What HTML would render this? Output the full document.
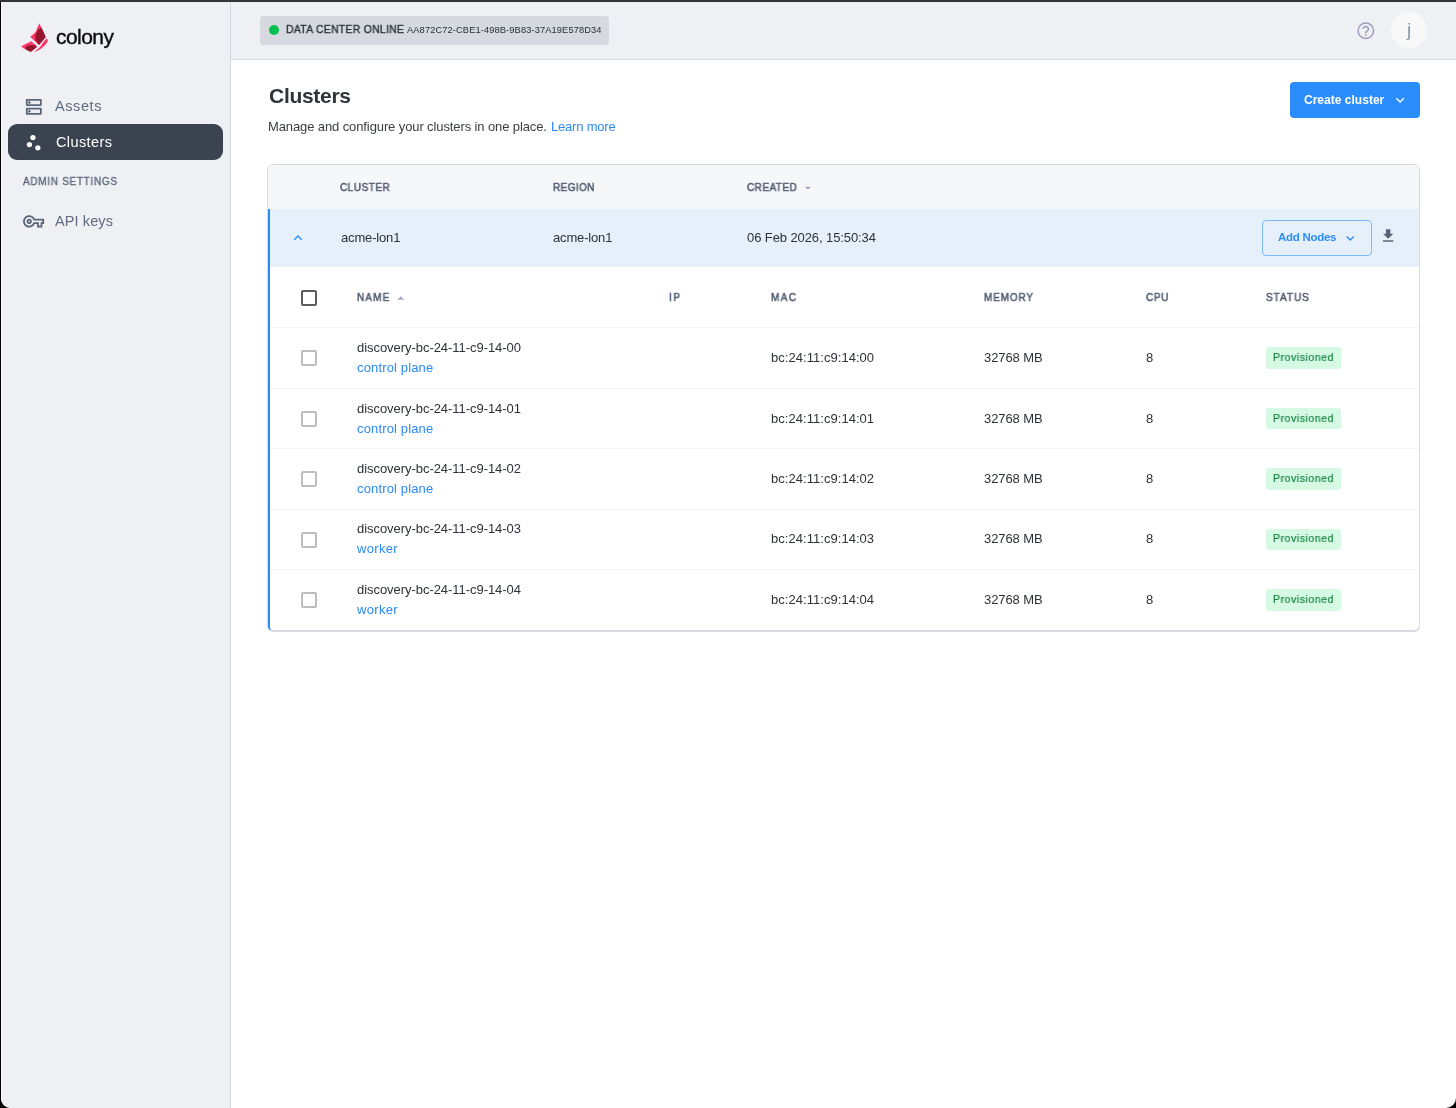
<!DOCTYPE html>
<html><head><meta charset="utf-8">
<style>
*{box-sizing:border-box;margin:0;padding:0}
html,body{width:1456px;height:1108px;overflow:hidden;background:#000;font-family:"Liberation Sans",sans-serif;position:relative}
.t{position:absolute;white-space:nowrap;line-height:normal;will-change:transform}
.b{position:absolute}
.cb{position:absolute;left:301px;width:16px;height:16px;border:2px solid #bdbdbd;border-radius:2px;background:#fff}
.rl{position:absolute;left:270px;width:1149px;height:1px;background:#f3f4f4}
.badge{position:absolute;left:1266px;width:75px;height:21.5px;background:#d5f9e3;border-radius:3px}

</style></head><body>
<div class="b" style="left:0;top:0;width:1456px;height:1px;background:#373737"></div><div class="b" style="left:0;top:1px;width:1456px;height:1px;background:#2f3130"></div>
<div class="b" style="left:0;top:2px;width:1456px;height:1106px;background:#fff;border-radius:0 0 10px 10px;border-left:1px solid #000"></div>
<div class="b" style="left:1px;top:2px;width:229px;height:1106px;background:#eff0f4;border-left:1px solid #fff;border-bottom-left-radius:10px"></div>
<div class="b" style="left:230px;top:2px;width:1px;height:1106px;background:#d6d9df"></div>
<div class="b" style="left:231px;top:2px;width:1225px;height:57px;background:#eff0f4"></div>
<div class="b" style="left:231px;top:59px;width:1225px;height:1px;background:#d6d9df"></div>

<!-- logo -->
<svg class="b" style="left:18px;top:20px" width="34" height="36" viewBox="18 20 34 36">
  <path d="M39.3 23.2 L45.7 36.9 L39 45.2 L30.2 36.7 L35.4 32.6 Z" fill="#ff3566"/>
  <path d="M41.4 27.4 L45.7 36.9 L39.1 44.8 C36.3 42 35 39.5 35.2 36.4 C35.4 33 37.5 29.6 41.4 27.4 Z" fill="#95152f"/>
  <path d="M21 46.3 L31.3 41.2 L37 46.4 L31 51.8 C27.5 50.5 24 48.6 21 46.3 Z" fill="#ff3566"/>
  <path d="M25 48.2 C26 46.3 27.5 45.3 30 45.2 L35.3 45.3 L37 46.9 L31 51.8 C28.6 51.2 26.6 49.9 25 48.2 Z" fill="#95152f"/>
  <path d="M46.6 38.4 L48 40.3 C46 45.5 41 50 33.6 52.3 C38.5 49 41.5 46 43 42.5 Z" fill="#ff3566"/>
</svg>
<!-- nav icons -->
<svg class="b" style="left:0;top:0" width="240" height="240" viewBox="0 0 240 240">
  <g transform="translate(23.25 96.3) scale(0.88)" fill="#5a6579">
    <path d="M19 15v4H5v-4h14m1-2H4c-.55 0-1 .45-1 1v6c0 .55.45 1 1 1h16c.55 0 1-.45 1-1v-6c0-.55-.45-1-1-1zM7 18.5c-.82 0-1.5-.67-1.5-1.5s.68-1.5 1.5-1.5 1.5.67 1.5 1.5-.67 1.5-1.5 1.5zM19 5v4H5V5h14m1-2H4c-.55 0-1 .45-1 1v6c0 .55.45 1 1 1h16c.55 0 1-.45 1-1V4c0-.55-.45-1-1-1zM7 8.5c-.82 0-1.5-.67-1.5-1.5S6.18 5.5 7 5.5s1.5.68 1.5 1.5S7.830 8.5 7 8.5z"/>
  </g>
</svg>
<div class="b" style="left:8px;top:124px;width:215px;height:36px;background:#3b4250;border-radius:9px"></div>
<svg class="b" style="left:0;top:0" width="240" height="240" viewBox="0 0 240 240">
  <g transform="translate(23.25 132.3) scale(0.88)" fill="#fff">
    <circle cx="7" cy="14" r="3"/><circle cx="11" cy="6" r="3"/><circle cx="16.6" cy="17.6" r="3"/>
  </g>
  <g transform="translate(23.1 210.9) scale(0.875)" fill="#5a6579">
    <path d="M22 19h-6v-4h-2.68c-1.14 2.42-3.6 4-6.32 4-3.86 0-7-3.14-7-7s3.14-7 7-7c2.72 0 5.17 1.58 6.32 4H24v6h-2v4zm-4-2h2v-4h2v-2H11.94l-.23-.67C11.01 8.340 9.11 7 7 7c-2.76 0-5 2.24-5 5s2.24 5 5 5c2.11 0 4.01-1.34 4.71-3.33l.23-.67H18v4zM7 15c-1.65 0-3-1.35-3-3s1.35-3 3-3 3 1.35 3 3-1.35 3-3 3zm0-4c-.55 0-1 .45-1 1s.45 1 1 1 1-.45 1-1-.45-1-1-1z"/>
  </g>
</svg>

<!-- header chip -->
<div class="b" style="left:260px;top:16px;width:349px;height:29px;background:#d6d9e0;border-radius:4px"></div>
<div class="b" style="left:269px;top:25px;width:10px;height:10px;border-radius:50%;background:#00c150"></div>
<svg class="b" style="left:1340px;top:0" width="60" height="60" viewBox="1340 0 60 60">
  <g transform="translate(1355.6 20.6) scale(0.85)" fill="#9c9cbb">
    <circle cx="12" cy="12" r="9.15" fill="none" stroke="#9c9cbb" stroke-width="1.7"/>
    <path d="M11.1 17.9h1.8v-1.8h-1.8v1.8zM12 6c-2.21 0-4 1.79-4 4h1.8c0-1.2.95-2.2 2.2-2.2s2.2 1 2.2 2.2c0 2-3.1 1.75-3.1 5h1.8c0-2.25 3.1-2.5 3.1-5 0-2.21-1.79-4-4-4z"/>
  </g>
</svg>
<div class="b" style="left:1391px;top:12px;width:36px;height:36px;border-radius:50%;background:#f8f8f9"></div>

<!-- title button -->
<div class="b" style="left:1290px;top:82px;width:130px;height:36px;background:#2b8cfb;border-radius:4px"></div>
<svg class="b" style="left:1380px;top:85px" width="30" height="30" viewBox="1380 85 30 30">
  <g transform="translate(1391.7 91.7) scale(0.7)" fill="#fff"><path d="M16.59 8.59L12 13.17 7.41 8.59 6 10l6 6 6-6z"/></g>
</svg>

<!-- card -->
<div class="b" style="left:267px;top:164px;width:1153px;height:467px;border:1px solid #d8d9e2;border-radius:6px;background:#fff;box-shadow:0 1px 0 #dadbe0"></div>
<div class="b" style="left:268px;top:165px;width:1151px;height:44px;background:#f6f7f9;border-radius:5px 5px 0 0"></div>
<div class="b" style="left:268px;top:209px;width:1151px;height:58px;background:#e6f0fa"></div>
<div class="b" style="left:268px;top:209px;width:4px;height:421px;border-left:2px solid #2b8cfb;border-bottom-left-radius:5px"></div>
<svg class="b" style="left:280px;top:220px" width="30" height="30" viewBox="280 220 30 30">
  <g transform="translate(289.6 229.4) scale(0.7)" fill="#2b8cfb"><path d="M12 8l-6 6 1.41 1.41L12 10.830l4.59 4.58L18 14z"/></g>
</svg>
<svg class="b" style="left:795px;top:175px" width="20" height="20" viewBox="795 175 20 20">
  <g transform="translate(801.1 181) scale(0.57)" fill="#9a98c0"><path d="M7 10l5 5 5-5z"/></g>
</svg>
<div class="b" style="left:1262px;top:220px;width:110px;height:36px;border:1px solid #7cb8fb;border-radius:4px"></div>
<svg class="b" style="left:1335px;top:225px" width="25" height="25" viewBox="1335 225 25 25">
  <g transform="translate(1342.2 230.3) scale(0.667)" fill="#2b8cfb"><path d="M16.59 8.59L12 13.17 7.41 8.59 6 10l6 6 6-6z"/></g>
</svg>
<svg class="b" style="left:1375px;top:222px" width="25" height="25" viewBox="1375 222 25 25">
  <g transform="translate(1379.3 227) scale(0.74)" fill="#5a6478"><path d="M19 9h-4V3H9v6H5l7 7 7-7zM5 18v2h14v-2H5z"/></g>
</svg>

<!-- nested header -->
<div class="cb" style="top:290px;border-color:#5b5b5b"></div>
<svg class="b" style="left:385px;top:285px" width="25" height="25" viewBox="385 285 25 25">
  <g transform="translate(392.5 290.1) scale(0.69)" fill="#a8a6c8"><path d="M7 14l5-5 5 5z"/></g>
</svg>
<div class="rl" style="top:327px"></div>
<div class="rl" style="top:388px"></div>
<div class="rl" style="top:448px"></div>
<div class="rl" style="top:509px"></div>
<div class="rl" style="top:569px"></div>
<div class="cb" style="top:350px"></div>
<div class="cb" style="top:411px"></div>
<div class="cb" style="top:471px"></div>
<div class="cb" style="top:532px"></div>
<div class="cb" style="top:592px"></div>
<div class="badge" style="top:347px"></div>
<div class="badge" style="top:407.9px"></div>
<div class="badge" style="top:468.4px"></div>
<div class="badge" style="top:528.6px"></div>
<div class="badge" style="top:589.2px"></div>

<div id="logo" class="t" style="left:56.00px;top:24.60px;font-size:21px;font-weight:normal;color:#0d0d0d;letter-spacing:-0.541px;-webkit-text-stroke:0.4px #0d0d0d">colony</div>
<div id="assets" class="t" style="left:55.20px;top:97.88px;font-size:14.5px;font-weight:normal;color:#5f6b80;letter-spacing:0.595px">Assets</div>
<div id="clusters_nav" class="t" style="left:55.50px;top:133.78px;font-size:14.5px;font-weight:normal;color:#ffffff;letter-spacing:0.402px">Clusters</div>
<div id="admin" class="t" style="left:23.00px;top:174.80px;font-size:10.5px;font-weight:normal;-webkit-text-stroke:0.35px #5c677b;color:#5c677b;letter-spacing:0.741px;transform:scaleX(0.95);transform-origin:0 0">ADMIN SETTINGS</div>
<div id="apikeys" class="t" style="left:55.40px;top:212.88px;font-size:14.5px;font-weight:normal;color:#5f6b80;letter-spacing:0.110px">API keys</div>
<div id="dco" class="t" style="left:285.80px;top:23.05px;font-size:11px;font-weight:normal;-webkit-text-stroke:0.35px #2a2f38;color:#2a2f38;letter-spacing:0.280px;transform:scaleX(0.95);transform-origin:0 0">DATA CENTER ONLINE</div>
<div id="dcid" class="t" style="left:407.10px;top:24.58px;font-size:9.3px;font-weight:normal;color:#2a2f38;letter-spacing:0.108px">AA872C72-CBE1-498B-9B83-37A19E578D34</div>
<div id="j" class="t" style="left:1406.50px;top:19.30px;font-size:19px;font-weight:normal;color:#8a96ab;letter-spacing:0.000px">j</div>
<div id="title" class="t" style="left:268.50px;top:84.20px;font-size:21px;font-weight:bold;color:#303339;letter-spacing:-0.290px">Clusters</div>
<div id="sub" class="t" style="left:268.00px;top:118.83px;font-size:13px;font-weight:normal;color:#3a3d44;letter-spacing:-0.107px">Manage and configure your clusters in one place.</div>
<div id="learn" class="t" style="left:550.60px;top:118.83px;font-size:13px;font-weight:normal;color:#2a8af6;letter-spacing:-0.198px">Learn more</div>
<div id="create" class="t" style="left:1304.20px;top:93.04px;font-size:12px;font-weight:bold;color:#ffffff;letter-spacing:0.019px">Create cluster</div>
<div id="h_cluster" class="t" style="left:340.30px;top:181.20px;font-size:10.5px;font-weight:normal;-webkit-text-stroke:0.55px #535e72;color:#535e72;letter-spacing:0.542px;transform:scaleX(0.95);transform-origin:0 0">CLUSTER</div>
<div id="h_region" class="t" style="left:552.50px;top:181.20px;font-size:10.5px;font-weight:normal;-webkit-text-stroke:0.55px #535e72;color:#535e72;letter-spacing:0.440px;transform:scaleX(0.95);transform-origin:0 0">REGION</div>
<div id="h_created" class="t" style="left:747.20px;top:181.20px;font-size:10.5px;font-weight:normal;-webkit-text-stroke:0.55px #535e72;color:#535e72;letter-spacing:0.495px;transform:scaleX(0.95);transform-origin:0 0">CREATED</div>
<div id="c_name" class="t" style="left:340.90px;top:230.24px;font-size:13px;font-weight:normal;color:#2e3138;letter-spacing:-0.163px">acme-lon1</div>
<div id="c_region" class="t" style="left:552.50px;top:230.24px;font-size:13px;font-weight:normal;color:#2e3138;letter-spacing:-0.163px">acme-lon1</div>
<div id="c_created" class="t" style="left:747.20px;top:230.24px;font-size:13px;font-weight:normal;color:#2e3138;letter-spacing:-0.092px">06 Feb 2026, 15:50:34</div>
<div id="addnodes" class="t" style="left:1277.50px;top:231.39px;font-size:11.5px;font-weight:bold;color:#2b8cfb;letter-spacing:-0.275px">Add Nodes</div>
<div id="n_name" class="t" style="left:357.00px;top:290.80px;font-size:10.5px;font-weight:normal;-webkit-text-stroke:0.55px #535e72;color:#535e72;letter-spacing:1.238px;transform:scaleX(0.95);transform-origin:0 0">NAME</div>
<div id="n_ip" class="t" style="left:668.70px;top:290.80px;font-size:10.5px;font-weight:normal;-webkit-text-stroke:0.55px #535e72;color:#535e72;letter-spacing:1.695px;transform:scaleX(0.95);transform-origin:0 0">IP</div>
<div id="n_mac" class="t" style="left:770.90px;top:290.80px;font-size:10.5px;font-weight:normal;-webkit-text-stroke:0.55px #535e72;color:#535e72;letter-spacing:1.513px;transform:scaleX(0.95);transform-origin:0 0">MAC</div>
<div id="n_mem" class="t" style="left:983.80px;top:290.80px;font-size:10.5px;font-weight:normal;-webkit-text-stroke:0.55px #535e72;color:#535e72;letter-spacing:0.913px;transform:scaleX(0.95);transform-origin:0 0">MEMORY</div>
<div id="n_cpu" class="t" style="left:1145.90px;top:290.80px;font-size:10.5px;font-weight:normal;-webkit-text-stroke:0.55px #535e72;color:#535e72;letter-spacing:0.731px;transform:scaleX(0.95);transform-origin:0 0">CPU</div>
<div id="n_status" class="t" style="left:1266.40px;top:290.80px;font-size:10.5px;font-weight:normal;-webkit-text-stroke:0.55px #535e72;color:#535e72;letter-spacing:1.046px;transform:scaleX(0.95);transform-origin:0 0">STATUS</div>
<div id="r0_name" class="t" style="left:357.00px;top:340.04px;font-size:13px;font-weight:normal;color:#2e3138;letter-spacing:-0.047px">discovery-bc-24-11-c9-14-00</div>
<div id="r0_role" class="t" style="left:357.00px;top:359.94px;font-size:13px;font-weight:normal;color:#2a8af6;letter-spacing:0.146px">control plane</div>
<div id="r0_mac" class="t" style="left:770.90px;top:350.14px;font-size:13px;font-weight:normal;color:#2e3138;letter-spacing:0.043px">bc:24:11:c9:14:00</div>
<div id="r0_mem" class="t" style="left:983.80px;top:350.14px;font-size:13px;font-weight:normal;color:#2e3138;letter-spacing:-0.081px">32768 MB</div>
<div id="r0_cpu" class="t" style="left:1146.00px;top:350.14px;font-size:13px;font-weight:normal;color:#2e3138;letter-spacing:0.000px">8</div>
<div id="r0_prov" class="t" style="left:1273.40px;top:350.75px;font-size:11px;font-weight:normal;-webkit-text-stroke:0.2px #178343;color:#178343;letter-spacing:0.615px;transform:scaleX(0.95);transform-origin:0 0">Provisioned</div>
<div id="r1_name" class="t" style="left:357.00px;top:400.83px;font-size:13px;font-weight:normal;color:#2e3138;letter-spacing:-0.047px">discovery-bc-24-11-c9-14-01</div>
<div id="r1_role" class="t" style="left:357.00px;top:420.74px;font-size:13px;font-weight:normal;color:#2a8af6;letter-spacing:0.146px">control plane</div>
<div id="r1_mac" class="t" style="left:770.90px;top:410.94px;font-size:13px;font-weight:normal;color:#2e3138;letter-spacing:0.043px">bc:24:11:c9:14:01</div>
<div id="r1_mem" class="t" style="left:983.80px;top:410.94px;font-size:13px;font-weight:normal;color:#2e3138;letter-spacing:-0.081px">32768 MB</div>
<div id="r1_cpu" class="t" style="left:1146.00px;top:410.94px;font-size:13px;font-weight:normal;color:#2e3138;letter-spacing:0.000px">8</div>
<div id="r1_prov" class="t" style="left:1273.40px;top:411.55px;font-size:11px;font-weight:normal;-webkit-text-stroke:0.2px #178343;color:#178343;letter-spacing:0.615px;transform:scaleX(0.95);transform-origin:0 0">Provisioned</div>
<div id="r2_name" class="t" style="left:357.00px;top:461.33px;font-size:13px;font-weight:normal;color:#2e3138;letter-spacing:-0.047px">discovery-bc-24-11-c9-14-02</div>
<div id="r2_role" class="t" style="left:357.00px;top:481.24px;font-size:13px;font-weight:normal;color:#2a8af6;letter-spacing:0.146px">control plane</div>
<div id="r2_mac" class="t" style="left:770.90px;top:471.44px;font-size:13px;font-weight:normal;color:#2e3138;letter-spacing:0.043px">bc:24:11:c9:14:02</div>
<div id="r2_mem" class="t" style="left:983.80px;top:471.44px;font-size:13px;font-weight:normal;color:#2e3138;letter-spacing:-0.081px">32768 MB</div>
<div id="r2_cpu" class="t" style="left:1146.00px;top:471.44px;font-size:13px;font-weight:normal;color:#2e3138;letter-spacing:0.000px">8</div>
<div id="r2_prov" class="t" style="left:1273.40px;top:472.05px;font-size:11px;font-weight:normal;-webkit-text-stroke:0.2px #178343;color:#178343;letter-spacing:0.615px;transform:scaleX(0.95);transform-origin:0 0">Provisioned</div>
<div id="r3_name" class="t" style="left:357.00px;top:521.04px;font-size:13px;font-weight:normal;color:#2e3138;letter-spacing:-0.047px">discovery-bc-24-11-c9-14-03</div>
<div id="r3_role" class="t" style="left:357.00px;top:540.94px;font-size:13px;font-weight:normal;color:#2a8af6;letter-spacing:0.317px">worker</div>
<div id="r3_mac" class="t" style="left:770.90px;top:531.13px;font-size:13px;font-weight:normal;color:#2e3138;letter-spacing:0.043px">bc:24:11:c9:14:03</div>
<div id="r3_mem" class="t" style="left:983.80px;top:531.13px;font-size:13px;font-weight:normal;color:#2e3138;letter-spacing:-0.081px">32768 MB</div>
<div id="r3_cpu" class="t" style="left:1146.00px;top:531.13px;font-size:13px;font-weight:normal;color:#2e3138;letter-spacing:0.000px">8</div>
<div id="r3_prov" class="t" style="left:1273.40px;top:531.75px;font-size:11px;font-weight:normal;-webkit-text-stroke:0.2px #178343;color:#178343;letter-spacing:0.615px;transform:scaleX(0.95);transform-origin:0 0">Provisioned</div>
<div id="r4_name" class="t" style="left:357.00px;top:582.14px;font-size:13px;font-weight:normal;color:#2e3138;letter-spacing:-0.047px">discovery-bc-24-11-c9-14-04</div>
<div id="r4_role" class="t" style="left:357.00px;top:602.04px;font-size:13px;font-weight:normal;color:#2a8af6;letter-spacing:0.317px">worker</div>
<div id="r4_mac" class="t" style="left:770.90px;top:592.24px;font-size:13px;font-weight:normal;color:#2e3138;letter-spacing:0.043px">bc:24:11:c9:14:04</div>
<div id="r4_mem" class="t" style="left:983.80px;top:592.24px;font-size:13px;font-weight:normal;color:#2e3138;letter-spacing:-0.081px">32768 MB</div>
<div id="r4_cpu" class="t" style="left:1146.00px;top:592.24px;font-size:13px;font-weight:normal;color:#2e3138;letter-spacing:0.000px">8</div>
<div id="r4_prov" class="t" style="left:1273.40px;top:592.85px;font-size:11px;font-weight:normal;-webkit-text-stroke:0.2px #178343;color:#178343;letter-spacing:0.615px;transform:scaleX(0.95);transform-origin:0 0">Provisioned</div>
</body></html>
